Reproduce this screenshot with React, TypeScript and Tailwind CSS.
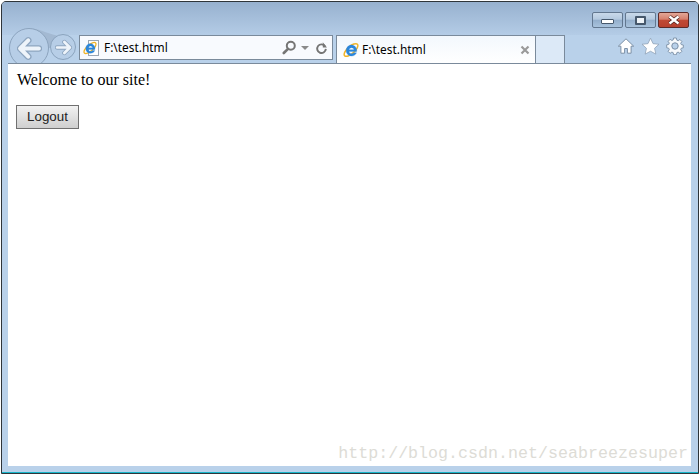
import { ReactNode } from "react";

function IeLogo({ size = 16 }: { size?: number }) {
  return (
    <svg width={size} height={size} viewBox="0 0 16 16" className="shrink-0">
      <ellipse cx="8" cy="8" rx="8.6" ry="3.6" transform="rotate(-42 8 8)" fill="none" stroke="#f0b429" strokeWidth="1.5" />
      <path d="M8.4 3c3 0 5.3 2.4 5.3 5.5v1.1H6c.2 1.4 1.2 2.2 2.6 2.2 1 0 1.7-.4 2.2-1h2.7c-.8 2-2.6 3.2-4.9 3.2-3.1 0-5.4-2.4-5.4-5.5S5.400 3 8.400 3Zm-2.400 4.700h5c-.2-1.200-1.200-2-2.400-2s-2.300.8-2.600 2Z" fill="#2a86dc" stroke="#2a86dc" strokeWidth=".3" />
    </svg>
  );
}

function WinButton({ className, children }: { className: string; children: ReactNode }) {
  return (
    <div className={"flex h-[16px] w-[31px] items-center justify-center rounded-[2px] border " + className}>
      {children}
    </div>
  );
}

function NavButton({ size, icon }: { size: number; icon: ReactNode }) {
  return (
    <div
      className="flex shrink-0 items-center justify-center rounded-full border border-[#8ba3bd] bg-[#b7cee7]"
      style={{ width: size, height: size }}
    >
      {icon}
    </div>
  );
}

function Arrow({ size, flip }: { size: number; flip?: boolean }) {
  return (
    <svg width={size} height={size} viewBox="0 0 20 20" className={flip ? "rotate-180" : ""}>
      <path d="M9 3.500 2.500 10 9 16.500M3 10h14.500" fill="none" stroke="#8ea6c0" strokeWidth="5.200" strokeLinecap="round" strokeLinejoin="round" />
      <path d="M9 3.500 2.500 10 9 16.500M3 10h14.500" fill="none" stroke="#eef4fa" strokeWidth="3.200" strokeLinecap="round" strokeLinejoin="round" />
    </svg>
  );
}

function App() {
  return (
    <div className="flex h-[474px] w-[700px] bg-white pl-px pr-px pt-px">
      <div className="flex min-w-0 flex-1 flex-col rounded-t-[5px] border border-[#2f353a] bg-[#1c2a33]">
        <div className="flex min-h-0 flex-1 flex-col overflow-hidden rounded-t-[4px] border-b border-[#18b5c9] bg-[#b9d1ea] font-['Liberation_Sans',sans-serif]">
          {/* title bar */}
          <div className="flex h-[33px] shrink-0 items-start justify-end gap-[2px] bg-gradient-to-b from-[#97b1cf] to-[#b4cce6] pr-[9px] pt-[10px]">
            <WinButton className="border-[#62778f] bg-[linear-gradient(#c9d9ea_0%,#b4c9df_45%,#93aecb_50%,#a9c3dd_100%)]">
              <div className="mt-[3px] h-[5px] w-[13px] rounded-[1px] border border-[#46586c] bg-white" />
            </WinButton>
            <WinButton className="border-[#62778f] bg-[linear-gradient(#c9d9ea_0%,#b4c9df_45%,#93aecb_50%,#a9c3dd_100%)]">
              <div className="h-[9px] w-[11px] rounded-[1px] border-2 border-[#46586c] bg-[#eef3f8]" />
            </WinButton>
            <WinButton className="border-[#5c2a28] bg-[linear-gradient(#e3a797_0%,#d67f6c_45%,#c04a36_50%,#b8412f_100%)]">
              <svg width="14" height="10" viewBox="0 0 14 10">
                <path d="M2.500 1.500 11.500 8.500M11.500 1.500 2.500 8.500" stroke="#4a1f1c" strokeWidth="3.800" />
                <path d="M2.500 1.500 11.500 8.500M11.500 1.500 2.500 8.500" stroke="#ffffff" strokeWidth="2.400" />
              </svg>
            </WinButton>
          </div>

          {/* toolbar */}
          <div className="flex h-[28px] shrink-0 items-start overflow-visible">
            <div className="relative ml-[7px] mt-[-7px] h-[35px] overflow-hidden">
              <svg width="44" height="20" viewBox="0 0 44 20" className="absolute left-[22px] top-0">
                <path d="M0 .500C8 .500 14 5 26 7.500L26 20H10L0 10Z" fill="#a3b9d2" />
              </svg>
              <div className="relative flex items-start">
                <NavButton size={40} icon={<Arrow size={25} />} />
                <div className="ml-[1px] mt-[6px]">
                  <NavButton size={26} icon={<Arrow size={17} flip />} />
                </div>
              </div>
            </div>
            <div className="ml-[3px] flex h-[25px] w-[254px] items-center border border-[#7a8a9b] bg-[#f8fafe] pl-[4px] pr-[4px]">
              <div className="relative h-[16px] w-[15px] shrink-0">
                <div className="absolute right-0 top-0 h-[16px] w-[11px] border border-[#9aa6b3] bg-white" />
                <div className="absolute left-[-1px] top-[1px]">
                  <IeLogo size={14} />
                </div>
              </div>
              <span className="ml-[5px] font-['Noto_Sans',sans-serif] text-[11.9px] text-black">F:\test.html</span>
              <div className="ml-auto flex items-center">
                <svg width="15" height="15" viewBox="0 0 15 15">
                  <circle cx="8.800" cy="5.800" r="4" fill="none" stroke="#757575" strokeWidth="2" />
                  <path d="M6 8.800 1.800 13" stroke="#757575" strokeWidth="2.600" strokeLinecap="round" />
                </svg>
                <div className="ml-[4px] h-0 w-0 border-x-[4px] border-t-[4px] border-x-transparent border-t-[#8a8a8a]" />
                <svg width="13" height="14" viewBox="0 0 15 15" className="ml-[6px]">
                  <path d="M11.600 5.400A5 5 0 1 0 12.500 8.500" fill="none" stroke="#757575" strokeWidth="2.200" />
                  <path d="M9 .8v6h4.800Z" fill="#757575" />
                </svg>
              </div>
            </div>
            <div className="ml-[3px] flex h-[28px] w-[200px] items-center border-x border-t border-[#7a8a9b] bg-gradient-to-b from-[#f3f8fd] to-white pl-[6px] pr-[5px]">
              <IeLogo size={16} />
              <span className="ml-[3px] mt-[1px] font-['Noto_Sans',sans-serif] text-[11.9px] text-black">F:\test.html</span>
              <svg width="10" height="10" viewBox="0 0 10 10" className="ml-auto">
                <path d="M1.500 1.500 8.500 8.500M8.500 1.500 1.500 8.500" stroke="#9a9a9a" strokeWidth="2.200" />
              </svg>
            </div>
            <div className="h-[28px] w-[29px] border-r border-t border-[#7a8a9b] bg-[#dce9f7]" />
            <div className="ml-auto mr-[14px] mt-[2px] flex items-center gap-[6px]">
              <svg width="18" height="18" viewBox="0 0 18 18">
                <path d="M9 1.800 1.300 9.200h2.600V16.200h3.700v-4.700h2.800v4.700h3.700V9.200h2.600Z" fill="#fff" stroke="#7c90a6" strokeWidth="1" strokeLinejoin="round" />
              </svg>
              <svg width="19" height="18" viewBox="0 0 20 18">
                <path d="m10 .8 2.700 5.700 6.200.7-4.600 4.200 1.300 6.100L10 14.500l-5.600 3 1.300-6.100L1.100 7.200l6.200-.7Z" fill="#fff" stroke="#8da0b5" strokeWidth=".8" strokeLinejoin="round" />
              </svg>
              <svg width="18" height="18" viewBox="0 0 18 18">
                <path d="M7.600 1h2.800l.4 2.100 1.300.6 1.800-1.200 2 2-1.200 1.800.6 1.300 2 .4v2.800l-2 .4-.6 1.300 1.200 1.800-2 2-1.800-1.200-1.300.6-.4 2H7.600l-.4-2-1.300-.6-1.800 1.200-2-2 1.200-1.800-.6-1.300-2-.4V7.800l2-.4.6-1.300-1.200-1.800 2-2 1.800 1.200 1.300-.6Z" fill="#f6f9fc" stroke="#7c90a6" strokeWidth=".9" strokeLinejoin="round" />
                <circle cx="9" cy="9" r="3.200" fill="#b9d1ea" stroke="#7c90a6" />
              </svg>
            </div>
          </div>

          {/* page */}
          <div className="ml-[6px] mr-[7px] flex min-h-0 flex-1 flex-col border-t border-[#7a8a9b] bg-white pl-[8px]">
            <p className="ml-[1px] mt-[7px] font-['Liberation_Serif',serif] text-[16px] leading-[18px] text-black">Welcome to our site!</p>
            <button className="mt-[16px] h-[24px] w-[63px] border border-[#707070] bg-gradient-to-b from-[#f2f2f2] to-[#cfcfcf] font-['Liberation_Sans',sans-serif] text-[13.33px] text-[#222222]">
              Logout
            </button>
            <div className="mb-[2px] mt-auto self-end pr-[3px] font-['Liberation_Mono',monospace] text-[16.67px] leading-[20px] text-[#dddcd6]">
              http://blog.csdn.net/seabreezesuper
            </div>
          </div>
          <div className="h-[6px] shrink-0 bg-[#b9d1ea]" />
        </div>
      </div>
    </div>
  );
}

export default App;
